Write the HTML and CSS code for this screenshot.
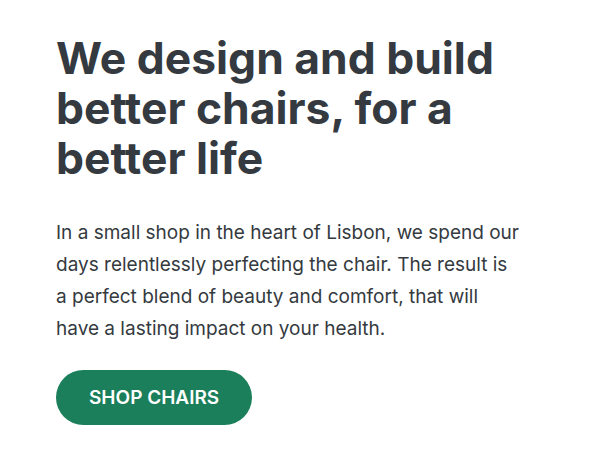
FILE: index.html
```html
<!DOCTYPE html>
<html lang="en">
<head>
<meta charset="utf-8">
<link rel="stylesheet" href="styles.css">
</head>
<body>
<section class="hero">
  <h1 class="hero-title">We design and build better chairs, for a better life</h1>
  <p class="hero-text">In a small shop in the heart of Lisbon, we spend our days relentlessly perfecting the chair. The result is a perfect blend of beauty and comfort, that will have a lasting impact on your health.</p>
  <a class="btn" href="#">Shop chairs</a>
</section>
</body>
</html>
```

FILE: styles.css
```css
* { box-sizing: border-box; margin: 0; padding: 0; }
html, body { background: #fff; }
body { font-family: Inter, "Noto Sans", sans-serif; color: #343a40; }
.hero {
  padding: 33px 56px 0;
  display: flex;
  flex-direction: column;
  align-items: flex-start;
}
.hero-title {
  font-size: 44.4px;
  line-height: 50px;
  font-weight: 700;
  letter-spacing: 0;
  max-width: 460px;
  color: #343a40;
}
.hero-text {
  margin-top: 34px;
  font-size: 19px;
  line-height: 32px;
  max-width: 465px;
  color: #343a40;
}
.btn {
  margin-top: 25px;
  display: inline-block;
  background: #1a7f5a;
  color: #fff;
  text-decoration: none;
  text-transform: uppercase;
  font-size: 19px;
  font-weight: 600;
  line-height: 55px;
  padding: 0 33px;
  border-radius: 100px;
}
```
